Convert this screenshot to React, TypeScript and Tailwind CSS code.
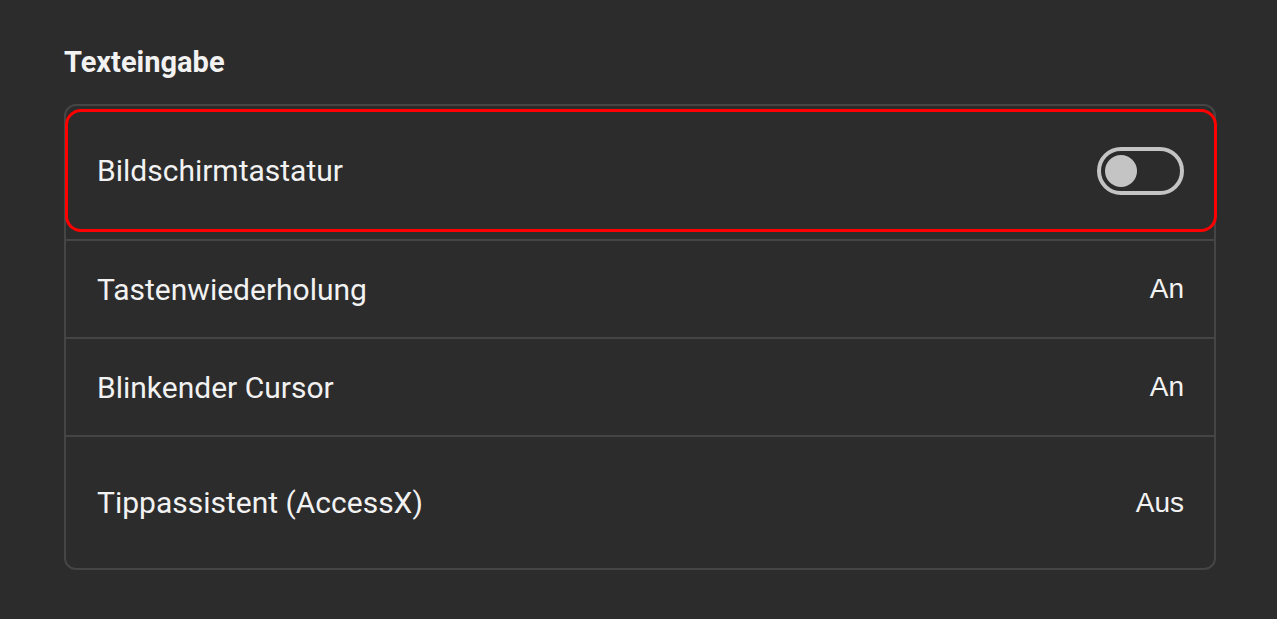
export default function App() {
  const rows = [
    { label: 'Tastenwiederholung', value: 'An', h: 'h-[98px] border-b-2 border-[#454545]' },
    { label: 'Blinkender Cursor', value: 'An', h: 'h-[98px] border-b-2 border-[#454545]' },
    { label: 'Tippassistent (AccessX)', value: 'Aus', h: 'h-[131px]' },
  ];

  return (
    <main className="min-h-screen w-full bg-[#2c2c2c] px-[64px] pt-[43px] font-['Roboto',sans-serif] text-[#f2f2f2]">
      <h2 className="text-[29px] leading-[38px] font-bold">Texteingabe</h2>
      <section className="mt-[23px] w-[1152px] rounded-[12px] border-2 border-[#454545]">
        <div className="flex h-[135px] items-start border-b-2 border-[#454545]">
          <div className="mt-[3px] -mr-[3px] -ml-px flex h-[123px] flex-1 items-center justify-between rounded-[16px] border-[3px] border-[#ff0000] pr-[30px] pl-[29px]">
            <span className="text-[30px]">Bildschirmtastatur</span>
            <button
              type="button"
              role="switch"
              aria-checked="false"
              className="flex h-[48px] w-[87px] items-center rounded-full border-4 border-[#c4c4c4] px-[4px]"
            >
              <span className="h-[32px] w-[32px] rounded-full bg-[#c4c4c4]" />
            </button>
          </div>
        </div>
        {rows.map((row) => (
          <div key={row.label} className={`flex items-center justify-between pr-[30px] pl-[31px] ${row.h}`}>
            <span className="text-[30px]">{row.label}</span>
            <span className="font-['Liberation_Sans',sans-serif] text-[28px]">{row.value}</span>
          </div>
        ))}
      </section>
    </main>
  );
}
